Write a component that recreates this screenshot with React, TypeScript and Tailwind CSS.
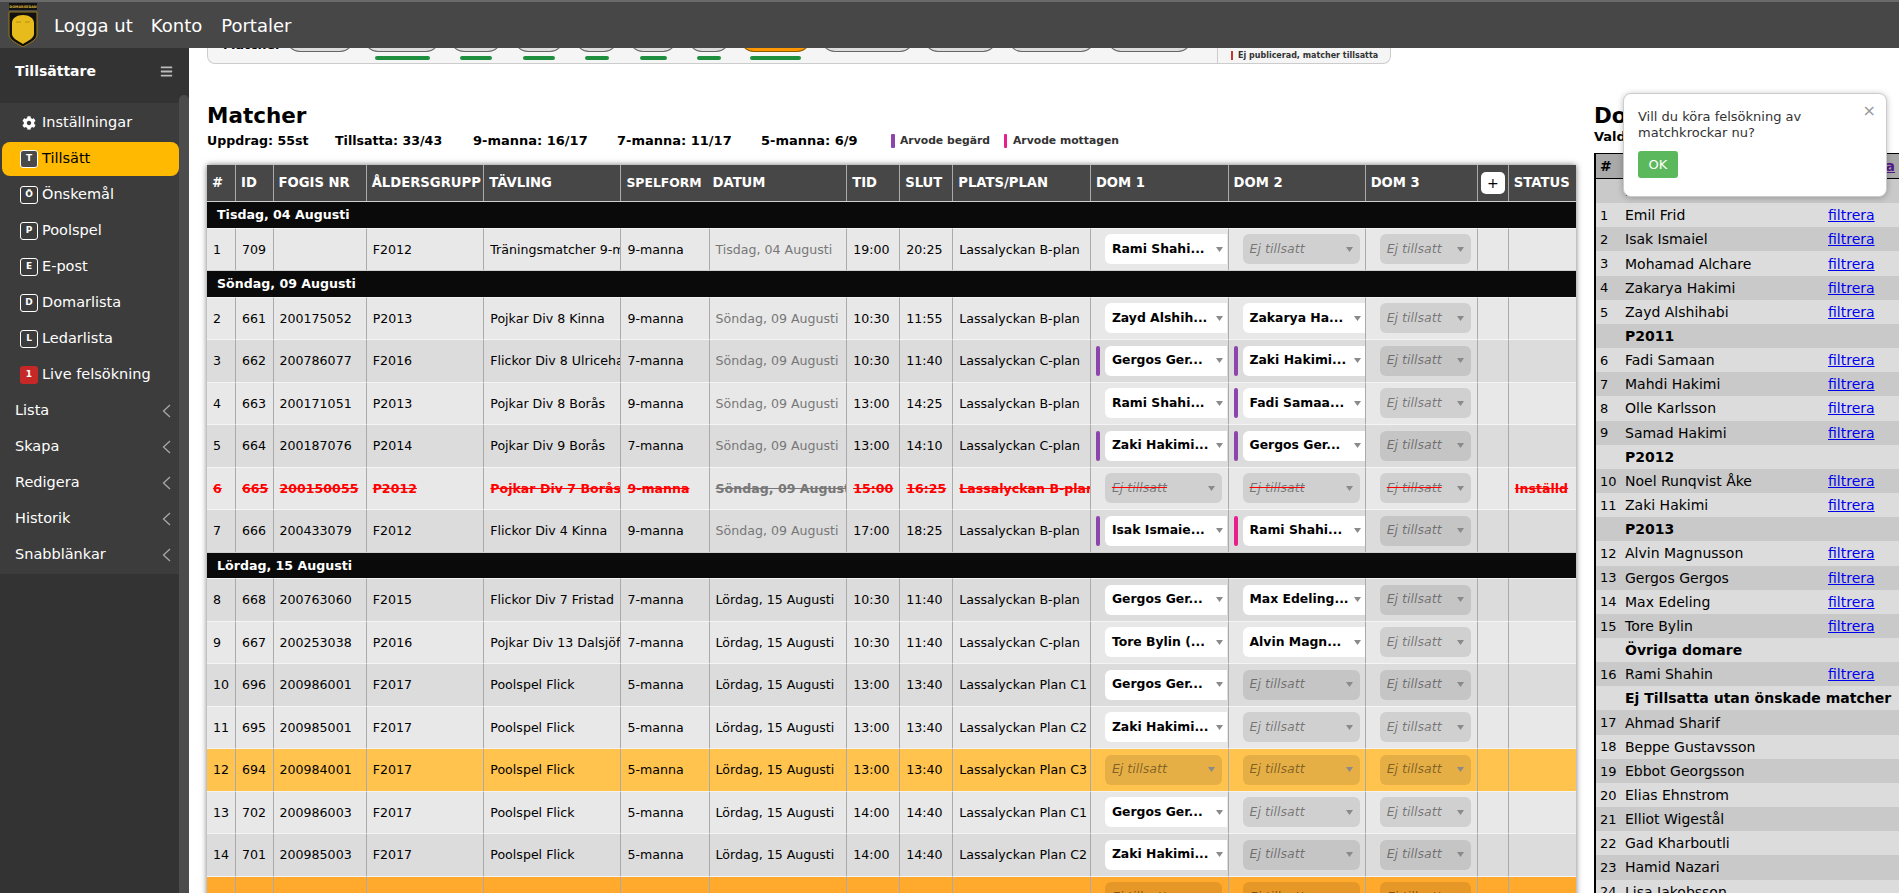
import { FaBars, FaCog } from "react-icons/fa";

const FONT = "font-['DejaVu_Sans',Verdana,sans-serif]";

type Sel = { t?: string; bar?: "p" | "m" };
type Row = {
  n?: number; id?: string; f?: string; a?: string; c?: string; s?: string; d?: string; t1?: string; t2?: string; p?: string;
  d1?: Sel; d2?: Sel; bg: string; greyDate?: boolean; cancelled?: boolean; status?: string;
};
type Item = { date: string } | Row;

const L = "bg-[#e8e8e8]";
const D = "bg-[#dcdcdc]";
const O = "bg-[#ffc34e]";
const O2 = "bg-[#ffa92d]";
const A1 = "Söndag, 09 Augusti";
const A2 = "Lördag, 15 Augusti";
const LB = "Lassalyckan B-plan";
const LC = "Lassalyckan C-plan";

const items: Item[] = [
  { date: "Tisdag, 04 Augusti" },
  { n: 1, id: "709", f: "", a: "F2012", c: "Träningsmatcher 9-manna", s: "9-manna", d: "Tisdag, 04 Augusti", t1: "19:00", t2: "20:25", p: LB, d1: { t: "Rami Shahi..." }, bg: L, greyDate: true },
  { date: A1 },
  { n: 2, id: "661", f: "200175052", a: "P2013", c: "Pojkar Div 8 Kinna", s: "9-manna", d: A1, t1: "10:30", t2: "11:55", p: LB, d1: { t: "Zayd Alshih..." }, d2: { t: "Zakarya Ha..." }, bg: L, greyDate: true },
  { n: 3, id: "662", f: "200786077", a: "F2016", c: "Flickor Div 8 Ulricehamn", s: "7-manna", d: A1, t1: "10:30", t2: "11:40", p: LC, d1: { t: "Gergos Ger...", bar: "p" }, d2: { t: "Zaki Hakimi...", bar: "p" }, bg: D, greyDate: true },
  { n: 4, id: "663", f: "200171051", a: "P2013", c: "Pojkar Div 8 Borås", s: "9-manna", d: A1, t1: "13:00", t2: "14:25", p: LB, d1: { t: "Rami Shahi..." }, d2: { t: "Fadi Samaa...", bar: "p" }, bg: L, greyDate: true },
  { n: 5, id: "664", f: "200187076", a: "P2014", c: "Pojkar Div 9 Borås", s: "7-manna", d: A1, t1: "13:00", t2: "14:10", p: LC, d1: { t: "Zaki Hakimi...", bar: "p" }, d2: { t: "Gergos Ger...", bar: "p" }, bg: D, greyDate: true },
  { n: 6, id: "665", f: "200150055", a: "P2012", c: "Pojkar Div 7 Borås", s: "9-manna", d: A1, t1: "15:00", t2: "16:25", p: LB, bg: L, cancelled: true, status: "Inställd" },
  { n: 7, id: "666", f: "200433079", a: "F2012", c: "Flickor Div 4 Kinna", s: "9-manna", d: A1, t1: "17:00", t2: "18:25", p: LB, d1: { t: "Isak Ismaie...", bar: "p" }, d2: { t: "Rami Shahi...", bar: "m" }, bg: D, greyDate: true },
  { date: A2 },
  { n: 8, id: "668", f: "200763060", a: "F2015", c: "Flickor Div 7 Fristad", s: "7-manna", d: A2, t1: "10:30", t2: "11:40", p: LB, d1: { t: "Gergos Ger..." }, d2: { t: "Max Edeling..." }, bg: D },
  { n: 9, id: "667", f: "200253038", a: "P2016", c: "Pojkar Div 13 Dalsjöfors", s: "7-manna", d: A2, t1: "10:30", t2: "11:40", p: LC, d1: { t: "Tore Bylin (..." }, d2: { t: "Alvin Magn..." }, bg: L },
  { n: 10, id: "696", f: "200986001", a: "F2017", c: "Poolspel Flick", s: "5-manna", d: A2, t1: "13:00", t2: "13:40", p: "Lassalyckan Plan C1", d1: { t: "Gergos Ger..." }, bg: D },
  { n: 11, id: "695", f: "200985001", a: "F2017", c: "Poolspel Flick", s: "5-manna", d: A2, t1: "13:00", t2: "13:40", p: "Lassalyckan Plan C2", d1: { t: "Zaki Hakimi..." }, bg: L },
  { n: 12, id: "694", f: "200984001", a: "F2017", c: "Poolspel Flick", s: "5-manna", d: A2, t1: "13:00", t2: "13:40", p: "Lassalyckan Plan C3", bg: O },
  { n: 13, id: "702", f: "200986003", a: "F2017", c: "Poolspel Flick", s: "5-manna", d: A2, t1: "14:00", t2: "14:40", p: "Lassalyckan Plan C1", d1: { t: "Gergos Ger..." }, bg: L },
  { n: 14, id: "701", f: "200985003", a: "F2017", c: "Poolspel Flick", s: "5-manna", d: A2, t1: "14:00", t2: "14:40", p: "Lassalyckan Plan C2", d1: { t: "Zaki Hakimi..." }, bg: D },
  { bg: O2 },
];

const sideItems = [
  { k: "T", label: "Tillsätt", active: true },
  { k: "Ö", label: "Önskemål" },
  { k: "P", label: "Poolspel" },
  { k: "E", label: "E-post" },
  { k: "D", label: "Domarlista" },
  { k: "L", label: "Ledarlista" },
];

const strip = [
  { b: "w-[68px] ml-[78px]", g: "" },
  { b: "w-[76px] ml-[10px]", g: "w-[55px]" },
  { b: "w-[52px] ml-[10px]", g: "w-[32px]" },
  { b: "w-[50px] ml-[12px]", g: "w-[32px]" },
  { b: "w-[43px] ml-[11px]", g: "w-[24px]" },
  { b: "w-[48px] ml-[11px]", g: "w-[27px]" },
  { b: "w-[42px] ml-[11px]", g: "w-[24px]" },
  { b: "w-[71px] ml-[10px]", g: "w-[51px]", on: true },
  { b: "w-[93px] ml-[10px]", g: "" },
  { b: "w-[73px] ml-[10px]", g: "" },
  { b: "w-[87px] ml-[11px]", g: "" },
  { b: "w-[85px] ml-[12px]", g: "" },
];

const cols = ["w-[28px]", "w-[37.5px]", "w-[93px]", "w-[117.5px]", "w-[137px]", "w-[88px]", "w-[137.5px]", "w-[53px]", "w-[53px]", "w-[137.5px]", "w-[137.5px]", "w-[137px]", "w-[112px]", "w-[31px]", "w-[68px]"];

const people: { n?: number; name: string; link?: boolean; bold?: boolean }[] = [
  { name: "P2010", bold: true },
  { n: 1, name: "Emil Frid", link: true },
  { n: 2, name: "Isak Ismaiel", link: true },
  { n: 3, name: "Mohamad Alchare", link: true },
  { n: 4, name: "Zakarya Hakimi", link: true },
  { n: 5, name: "Zayd Alshihabi", link: true },
  { name: "P2011", bold: true },
  { n: 6, name: "Fadi Samaan", link: true },
  { n: 7, name: "Mahdi Hakimi", link: true },
  { n: 8, name: "Olle Karlsson", link: true },
  { n: 9, name: "Samad Hakimi", link: true },
  { name: "P2012", bold: true },
  { n: 10, name: "Noel Runqvist Åke", link: true },
  { n: 11, name: "Zaki Hakimi", link: true },
  { name: "P2013", bold: true },
  { n: 12, name: "Alvin Magnusson", link: true },
  { n: 13, name: "Gergos Gergos", link: true },
  { n: 14, name: "Max Edeling", link: true },
  { n: 15, name: "Tore Bylin", link: true },
  { name: "Övriga domare", bold: true },
  { n: 16, name: "Rami Shahin", link: true },
  { name: "Ej Tillsatta utan önskade matcher", bold: true },
  { n: 17, name: "Ahmad Sharif" },
  { n: 18, name: "Beppe Gustavsson" },
  { n: 19, name: "Ebbot Georgsson" },
  { n: 20, name: "Elias Ehnstrom" },
  { n: 21, name: "Elliot Wigestål" },
  { n: 22, name: "Gad Kharboutli" },
  { n: 23, name: "Hamid Nazari" },
  { n: 24, name: "Lisa Jakobsson" },
];

function Arrow() {
  return (
    <svg width="7" height="5" viewBox="0 0 7 5" className="shrink-0">
      <polygon points="0,0 7,0 3.5,5" fill="#8a8a8a" />
    </svg>
  );
}

function Select({ sel, wGrey, cancelled }: { sel?: Sel; wGrey: string; cancelled?: boolean }) {
  const bar = sel?.bar === "p" ? "bg-[#8e44ad]" : sel?.bar === "m" ? "bg-[#e91e8c]" : "bg-transparent";
  return (
    <div className="flex items-center pl-[5px] gap-[5px]">
      <div className={`w-[4px] h-[30px] rounded-[2px] shrink-0 ${bar}`} />
      {sel?.t ? (
        <div className="flex items-center justify-between w-[122px] h-[30px] bg-white rounded-l-[6px] pl-[7px] pr-[4px] shrink-0">
          <span className="font-bold text-[12.4px] text-black whitespace-nowrap">{sel.t}</span>
          <Arrow />
        </div>
      ) : (
        <div className={`flex items-center justify-between h-[30px] bg-black/10 rounded-[6px] pl-[7px] pr-[7px] shrink-0 ${wGrey}`}>
          <span className={`italic text-[12.6px] text-black/45 whitespace-nowrap ${cancelled ? "line-through decoration-[#ff0000]" : ""}`}>Ej tillsatt</span>
          <Arrow />
        </div>
      )}
    </div>
  );
}

function Logo() {
  return (
    <svg width="30" height="44" viewBox="0 0 30 44" className="shrink-0">
      <rect x="1" y="0" width="28" height="7" fill="#111" />
      <text x="15" y="5" textAnchor="middle" fontSize="3.4" fontWeight="700" fill="#d9b13b" fontFamily="DejaVu Sans">DOMARSEDAN</text>
      <path d="M1 9h28v23c0 5-9 9-14 12C10 41 1 37 1 32z" fill="#111" stroke="#9a7b1c" strokeWidth="1" />
      <path d="M4 20c0-5 5-8 11-8s11 3 11 8v11c0 4-6 7-11 10C10 38 4 35 4 31z" fill="#e8bb1c" />
      <path d="M8 19h5M17 19h5" stroke="#b58d12" strokeWidth="1" />
    </svg>
  );
}

export default function App() {
  const base = "border-l border-t border-l-[#aaaaaa] border-t-[#f4f4f4] overflow-hidden whitespace-nowrap";
  const td = `${base} pl-[6px] pt-[2px]`;
  const tdSel = base;
  const th = "border-l border-[#aaaaaa] first:border-l-0 pl-[5px] text-left font-bold overflow-visible whitespace-nowrap";
  return (
    <div className={`relative w-[1899px] h-[893px] overflow-hidden bg-white text-black ${FONT}`}>
      <header className="flex items-center h-[48px] bg-[#474747] border-t-[2px] border-t-[#6a6a6a] pl-[8px]">
        <Logo />
        <nav className="flex ml-[16px] text-[18px] text-white">
          <span>Logga ut</span>
          <span className="ml-[18px]">Konto</span>
          <span className="ml-[19px]">Portaler</span>
        </nav>
      </header>

      <div className="flex h-[845px]">
        <aside className="w-[189px] shrink-0 bg-[#333333] flex flex-col">
          <div className="flex items-center justify-between h-[47px] pl-[15px] pr-[16px] text-[14px] font-bold text-white">
            <span>Tillsättare</span>
            <FaBars className="text-[#bbbbbb] text-[13px]" />
          </div>
          <div className="flex flex-1">
            <div className="w-[179px] shrink-0 pt-[8px]">
              <div className="bg-[#3c3c3c] pt-[2px] pb-[1px] h-[471px] text-[14.5px] text-white">
                <div className="flex items-center h-[36px] pl-[22px]">
                  <FaCog className="text-[14px] mr-[6px]" />
                  <span>Inställningar</span>
                </div>
                {sideItems.map((s) => (
                  <div key={s.k} className="flex items-center h-[36px]">
                    <div className={`flex items-center w-[177px] h-[34px] ml-[2px] pl-[18px] rounded-[8px] ${s.active ? "bg-[#ffb900] text-black" : ""}`}>
                      <span className={`flex items-center justify-center w-[18px] h-[18px] rounded-[3px] border border-white text-[9px] font-bold mr-[4px] ${s.active ? "bg-[#4a4a4a] text-white" : ""}`}>{s.k}</span>
                      <span>{s.label}</span>
                    </div>
                  </div>
                ))}
                <div className="flex items-center h-[36px] ml-[2px] pl-[18px]">
                  <span className="flex items-center justify-center w-[18px] h-[18px] rounded-[3px] bg-[#c62828] text-[9px] font-bold mr-[4px]">1</span>
                  <span>Live felsökning</span>
                </div>
                {["Lista", "Skapa", "Redigera", "Historik", "Snabblänkar"].map((t) => (
                  <div key={t} className="flex items-center justify-between h-[36px] pl-[15px] pr-[8px]">
                    <span>{t}</span>
                    <svg width="9" height="14" viewBox="0 0 9 14" fill="none" stroke="#a8a8a8" strokeWidth="1.3">
                      <polyline points="8,1 1.5,7 8,13" />
                    </svg>
                  </div>
                ))}
              </div>
            </div>
            <div className="w-[10px] bg-[#4c4c4c] rounded-t-[5px]" />
          </div>
        </aside>

        <main className="flex flex-1 min-w-0 pl-[18px] gap-[18px] overflow-hidden">
          <section className="w-[1369px] shrink-0">
            <div className="flex w-[1184px] h-[16px] bg-[#f5f5f5] border border-t-0 border-[#cccccc] rounded-b-[8px]">
              <div className="flex-1 flex items-start relative overflow-hidden">
                <span className="absolute left-[15px] top-[-12px] text-[12.6px] font-bold">Matcher</span>
                {strip.map((s, i) => (
                  <div key={i} className={`flex flex-col items-center shrink-0 ${s.b}`}>
                    <div className={`w-full h-[16px] -mt-[12px] rounded-b-[14px] border-b border-x ${s.on ? "bg-[#ff9800] border-[#8a5a00]" : "bg-[#dddddd] border-[#666666]"}`} />
                    {s.g && <div className={`h-[4px] mt-[4px] rounded-[2px] bg-[#1e8f3f] ${s.g}`} />}
                  </div>
                ))}
              </div>
              <div className="flex items-center w-[173px] border-l border-[#cccccc] pl-[13px] text-[8px] font-bold text-[#333333] whitespace-nowrap">
                <span className="w-[2px] h-[9px] bg-[#c0392b] mr-[5px] shrink-0" />
                Ej publicerad, matcher tillsatta
              </div>
            </div>

            <h1 className="mt-[37px] h-[29px] leading-[30px] text-[21.5px] font-bold">Matcher</h1>
            <div className="flex items-center h-[20px] mt-[1px] text-[12.6px] font-bold whitespace-nowrap">
              <span className="w-[128px]">Uppdrag: 55st</span>
              <span className="w-[138px]">Tillsatta: 33/43</span>
              <span className="w-[144px] text-[13px]">9-manna: 16/17</span>
              <span className="w-[144px] text-[13px]">7-manna: 11/17</span>
              <span className="w-[130px] text-[13px]">5-manna: 6/9</span>
              <span className="flex items-center text-[10.8px] text-[#333333] w-[113px]">
                <span className="w-[4px] h-[14px] bg-[#8e44ad] rounded-[1px] mr-[5px]" />Arvode begärd
              </span>
              <span className="flex items-center text-[10.8px] text-[#333333]">
                <span className="w-[3px] h-[14px] bg-[#e91e8c] rounded-[1px] mr-[6px]" />Arvode mottagen
              </span>
            </div>

            <table className="mt-[14px] w-[1369px] table-fixed border-separate border-spacing-0 text-[12.6px] shadow-[0_0_6px_rgba(0,0,0,0.55)]">
              <colgroup>
                {cols.map((c, i) => <col key={i} className={c} />)}
              </colgroup>
              <thead>
                <tr className="h-[36px] bg-[#474747] text-white text-[13.2px]">
                  <th className={th}>#</th>
                  <th className={th}>ID</th>
                  <th className={th}>FOGIS NR</th>
                  <th className={th}>ÅLDERSGRUPP</th>
                  <th className={th}>TÄVLING</th>
                  <th className={`${th} text-[12.4px]`}>SPELFORM</th>
                  <th className="pl-[4px] text-left font-bold">DATUM</th>
                  <th className={th}>TID</th>
                  <th className={th}>SLUT</th>
                  <th className={th}>PLATS/PLAN</th>
                  <th className={th}>DOM 1</th>
                  <th className={th}>DOM 2</th>
                  <th className={th}>DOM 3</th>
                  <th className="border-l border-[#aaaaaa]">
                    <span className="flex items-center justify-center w-[24px] h-[22px] ml-[3px] bg-white rounded-[5px] text-black text-[14px] font-normal">+</span>
                  </th>
                  <th className={th}>STATUS</th>
                </tr>
              </thead>
              <tbody>
                {items.map((it, i) => {
                  if ("date" in it) {
                    return (
                      <tr key={i} className="h-[26.5px]">
                        <td colSpan={15} className="bg-[#0a0a0a] border-t border-[#cfcfcf] pl-[10px] pt-[2px] text-white font-bold">{it.date}</td>
                      </tr>
                    );
                  }
                  const c = it.cancelled ? "text-[#ff0000] font-bold line-through" : "";
                  const dateCol = it.greyDate ? "text-[#777777]" : "";
                  return (
                    <tr key={i} className={`h-[42.5px] ${it.bg}`}>
                      <td className={`${td} border-l-0 ${c}`}>{it.n}</td>
                      <td className={`${td} ${c}`}>{it.id}</td>
                      <td className={`${td} ${c}`}>{it.f}</td>
                      <td className={`${td} ${c}`}>{it.a}</td>
                      <td className={`${td} ${c}`}>{it.c}</td>
                      <td className={`${td} ${c}`}>{it.s}</td>
                      <td className={`${td} ${dateCol} ${it.cancelled ? "font-bold line-through text-[#777777]" : ""}`}>{it.d}</td>
                      <td className={`${td} ${c}`}>{it.t1}</td>
                      <td className={`${td} ${c}`}>{it.t2}</td>
                      <td className={`${td} ${c}`}>{it.p}</td>
                      <td className={tdSel}><Select sel={it.d1} wGrey="w-[117px]" cancelled={it.cancelled} /></td>
                      <td className={tdSel}><Select sel={it.d2} wGrey="w-[117px]" cancelled={it.cancelled} /></td>
                      <td className={tdSel}><Select wGrey="w-[91px]" cancelled={it.cancelled} /></td>
                      <td className={td}></td>
                      <td className={`${td} ${c}`}>{it.status}</td>
                    </tr>
                  );
                })}
              </tbody>
            </table>
          </section>

          <section className="flex-1 min-w-0">
            <h1 className="mt-[53px] h-[29px] leading-[30px] text-[21.5px] font-bold whitespace-nowrap">Domare</h1>
            <div className="h-[16px] -mt-[1px] leading-[16px] text-[13px] font-bold whitespace-nowrap">Valda domare:</div>
            <table className="mt-[8px] w-full table-fixed border-separate border-spacing-0 border-l-2 border-t border-black text-[14px]">
              <colgroup>
                <col className="w-[29px]" />
                <col className="w-[203px]" />
                <col />
              </colgroup>
              <thead>
                <tr className="h-[25px] bg-[#a9a9a9]">
                  <th className="border-b border-black pl-[4px] text-left font-bold">#</th>
                  <th className="border-b border-black pl-0 text-left font-bold">Namn</th>
                  <th className="border-b border-black pr-[4px] text-right font-bold text-[#551a8b] underline">Visa</th>
                </tr>
              </thead>
              <tbody>
                {people.map((p, i) => (
                  <tr key={i} className={`h-[24.17px] ${i % 2 === 0 ? "bg-[#c9c9c9]" : "bg-[#dcdcdc]"}`}>
                    <td className="pl-[4px] pt-[1px] text-[13px]">{p.n}</td>
                    <td className={`pt-[1px] whitespace-nowrap overflow-visible ${p.bold ? "font-bold" : ""}`}>{p.name}</td>
                    <td className="pt-[1px]">{p.link && <span className="text-[#0000ee] underline">filtrera</span>}</td>
                  </tr>
                ))}
              </tbody>
            </table>
          </section>
        </main>
      </div>

      <div className="absolute left-[1623px] top-[93px] w-[264px] h-[104px] bg-white border border-[#cccccc] rounded-[8px] shadow-[0_1px_6px_rgba(0,0,0,0.25)] pl-[14px] pt-[15px] text-[13px] leading-[16px] text-[#333333]">
        <button className="absolute right-[10px] top-[9px] text-[#999999] text-[16px] leading-[16px]">×</button>
        <p>Vill du köra felsökning av<br />matchkrockar nu?</p>
        <button className="mt-[10px] w-[40px] h-[27px] rounded-[3px] bg-[#5cb85c] text-white text-[13px]">OK</button>
      </div>
    </div>
  );
}
